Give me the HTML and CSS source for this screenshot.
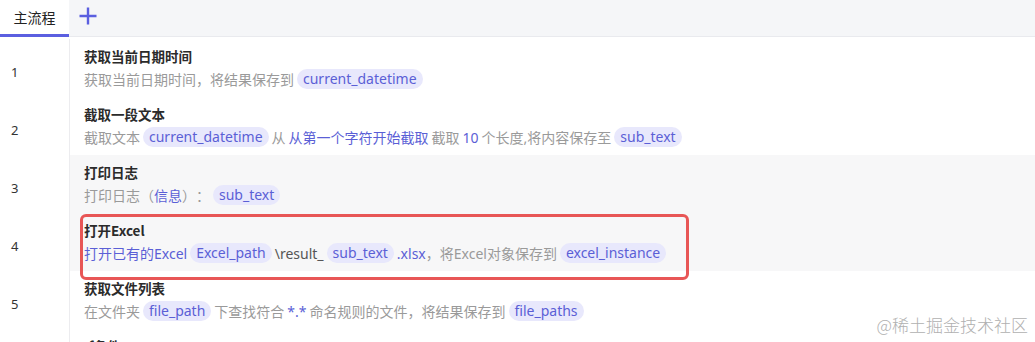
FILE: index.html
```html
<!DOCTYPE html>
<html lang="zh">
<head>
<meta charset="utf-8">
<link rel="stylesheet" href="styles.css">
</head>
<body>
<div class="page">
  <div class="tabbar">
    <div class="tab active">主流程</div>
    <div class="add">
      <svg width="18" height="18" viewBox="0 0 18 18"><path d="M9 0.5v17M0.5 9h17" stroke="#5b5fe0" stroke-width="2.4" fill="none"/></svg>
    </div>
    <div class="tabfill"></div>
  </div>
  <div class="list">
    <div class="row">
      <div class="num">1</div>
      <div class="body">
        <div class="title">获取当前日期时间</div>
        <div class="desc">获取当前日期时间，将结果保存到<span class="chip">current_datetime</span></div>
      </div>
    </div>
    <div class="row">
      <div class="num">2</div>
      <div class="body">
        <div class="title">截取一段文本</div>
        <div class="desc">截取文本<span class="chip">current_datetime</span>从<span class="hl gap">从第一个字符开始截取</span>截取<span class="hl gap">10</span>个长度,将内容保存至<span class="chip">sub_text</span></div>
      </div>
    </div>
    <div class="row shaded">
      <div class="num">3</div>
      <div class="body">
        <div class="title">打印日志</div>
        <div class="desc">打印日志（<span class="hl">信息</span>）：<span class="chip">sub_text</span></div>
      </div>
    </div>
    <div class="row shaded">
      <div class="num">4</div>
      <div class="body">
        <div class="title">打开Excel</div>
        <div class="desc"><span class="hl">打开已有的Excel</span><span class="chip">Excel_path</span><span class="dark">\result_</span><span class="chip">sub_text</span><span class="hl">.xlsx</span>，将Excel对象保存到<span class="chip">excel_instance</span></div>
        <div class="mark"></div>
      </div>
    </div>
    <div class="row">
      <div class="num">5</div>
      <div class="body">
        <div class="title">获取文件列表</div>
        <div class="desc">在文件夹<span class="chip">file_path</span>下查找符合<span class="hl gap">*.*</span>命名规则的文件，将结果保存到<span class="chip">file_paths</span></div>
      </div>
    </div>
    <div class="row">
      <div class="num"></div>
      <div class="body">
        <div class="title">If条件</div>
      </div>
    </div>
  </div>
  <div class="watermark">@稀土掘金技术社区</div>
</div>
</body>
</html>
```
FILE: styles.css
```css
html, body {
  margin: 0;
  padding: 0;
  background: #fff;
  overflow: hidden;
}
body {
  font-family: "Noto Sans", "Noto Sans CJK SC", sans-serif;
  font-size: 14px;
  color: #333;
  text-spacing-trim: space-all;
}
.page {
  position: relative;
  width: 1035px;
  height: 342px;
  overflow: hidden;
}
.tabbar {
  display: flex;
  height: 36px;
  background: #f5f6f8;
  border-bottom: 1px solid #e9eaee;
}
.tab {
  width: 69px;
  box-sizing: border-box;
  height: 37px;
  padding-top: 7px;
  text-align: center;
  background: #fff;
  color: #222;
  font-family: "Noto Sans CJK SC", sans-serif;
  font-size: 14px;
  line-height: 20px;
  border-bottom: 3px solid #5b5fe0;
  margin-bottom: -1px;
}
.add {
  width: 38px;
  display: flex;
  align-items: center;
  justify-content: center;
  padding-bottom: 4px;
}
.add svg { display: block; }
.tabfill { flex: 1; }
.list {
  padding-top: 2px;
}
.row {
  display: flex;
  height: 58px;
}
.num {
  width: 70px;
  flex: none;
  box-sizing: border-box;
  padding: 24px 0 0 11px;
  border-right: 1px solid #ececef;
  font-size: 13px;
  line-height: 18px;
  color: #333;
  background: #fff;
}
.body {
  position: relative;
  flex: 1;
  padding: 7px 0 0 14px;
}
.shaded .body {
  background: #f7f7f8;
}
.title {
  font-family: "Noto Sans CJK SC", sans-serif;
  font-weight: 700;
  font-size: 13.5px;
  line-height: 20px;
  color: #2b2b2b;
}
.desc {
  margin-top: 3px;
  display: flex;
  align-items: center;
  height: 20px;
  white-space: pre;
  font-family: "Noto Sans", "Noto Sans CJK SC", sans-serif;
  font-size: 14px;
  color: #9a9a9a;
}
.hl { color: #5b5fd6; }
.gap { margin: 0 3px; }
.dark { color: #555; }
.chip {
  display: inline-block;
  height: 20px;
  line-height: 20px;
  padding: 0 6px;
  margin: 0 3px;
  border-radius: 10px;
  background: #e8e8fc;
  color: #5b5fd6;
}
.mark {
  position: absolute;
  left: 10px;
  top: 1px;
  width: 609px;
  height: 66px;
  box-sizing: border-box;
  border: 3px solid #e85656;
  border-radius: 6px;
  z-index: 2;
}
.watermark {
  position: absolute;
  right: 7px;
  bottom: 5px;
  font-family: "Noto Sans CJK SC", sans-serif;
  font-weight: 300;
  font-size: 17px;
  color: #b0b0b0;
  z-index: 3;
}
```
